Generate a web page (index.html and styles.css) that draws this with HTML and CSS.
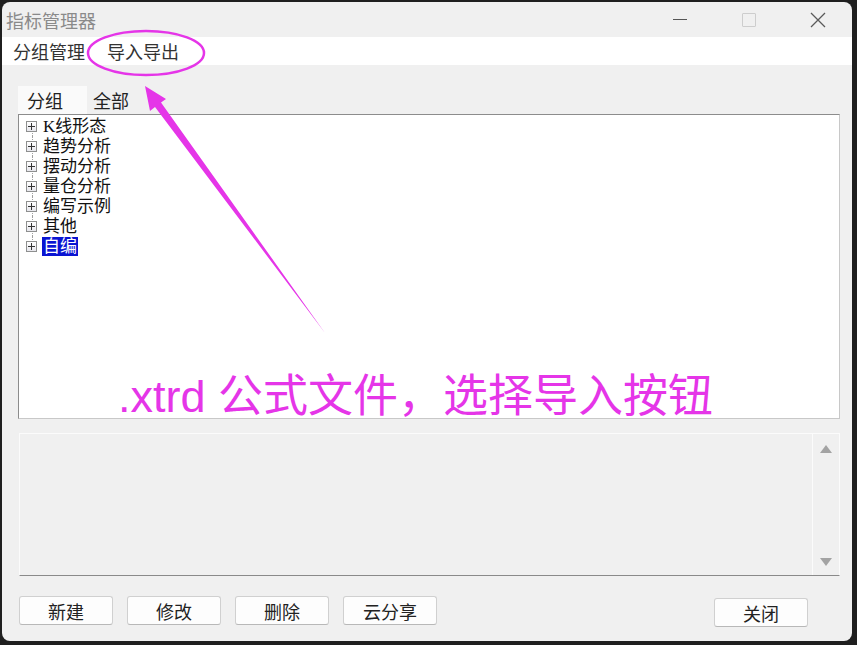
FILE: index.html
```html
<!DOCTYPE html>
<html>
<head>
<meta charset="utf-8">
<title>指标管理器</title>
<link rel="stylesheet" href="styles.css">
</head>
<body>
<div class="window">
  <div class="titlebar">
    <span class="title">指标管理器</span>
    <div class="controls">
      <span class="ctl"><span class="min"></span></span>
      <span class="ctl"><span class="max"></span></span>
      <span class="ctl">
        <svg width="16" height="16" viewBox="0 0 16 16"><path d="M1 1 L15 15 M15 1 L1 15" stroke="#5a5a5a" stroke-width="1.3" fill="none"/></svg>
      </span>
    </div>
  </div>

  <div class="menubar">
    <span class="menu-item">分组管理</span>
    <span class="menu-item">导入导出</span>
  </div>

  <div class="content">
    <div class="tabs">
      <span class="tab active">分组</span>
      <span class="tab">全部</span>
    </div>

    <div class="tree">
      <ul>
        <li><span class="expander"></span><span class="label">K线形态</span></li>
        <li><span class="expander"></span><span class="label">趋势分析</span></li>
        <li><span class="expander"></span><span class="label">摆动分析</span></li>
        <li><span class="expander"></span><span class="label">量仓分析</span></li>
        <li><span class="expander"></span><span class="label">编写示例</span></li>
        <li><span class="expander"></span><span class="label">其他</span></li>
        <li class="last"><span class="expander"></span><span class="label selected">自编</span></li>
      </ul>
    </div>

    <div class="desc">
      <div class="desc-text"></div>
      <div class="scrollbar">
        <span class="arrow up"></span>
        <span class="arrow down"></span>
      </div>
    </div>

    <div class="buttons">
      <div class="btn-group">
        <button class="btn" type="button">新建</button>
        <button class="btn" type="button">修改</button>
        <button class="btn" type="button">删除</button>
        <button class="btn" type="button">云分享</button>
      </div>
      <button class="btn close-btn" type="button">关闭</button>
    </div>
  </div>

  <!-- annotation drawn on top of the screenshot -->
  <svg class="markup" width="857" height="645" viewBox="0 0 857 645">
    <ellipse cx="146" cy="53" rx="58" ry="22" fill="none" stroke="#e535e8" stroke-width="2.5"/>
    <polygon points="145,86 166,99 161,102.5 325,333 155,107 150,111" fill="#e535e8"/>
  </svg>
  <div class="note">.xtrd 公式文件，选择导入按钮</div>
</div>
</body>
</html>
```

FILE: styles.css
```css
html, body {
  margin: 0;
  padding: 0;
}

body {
  background-color: #1f1f1f;
  width: 857px;
  height: 645px;
  overflow: hidden;
  font-family: "Noto Sans CJK SC", sans-serif;
}

.window {
  position: relative;
  margin: 2px 0 0 2px;
  width: 850px;
  height: 639px;
  background-color: #f0f0f0;
  border-radius: 8px;
  overflow: hidden;
}

/* title bar */
.titlebar {
  height: 35px;
  display: flex;
  align-items: center;
  justify-content: space-between;
}

.title {
  padding-left: 4px;
  font-size: 18px;
  color: #8a8a8a;
}

.controls {
  display: flex;
  height: 100%;
}

.ctl {
  width: 69px;
  display: flex;
  align-items: center;
  justify-content: center;
}

.min {
  width: 14px;
  border-top: 1px solid #555;
}

.max {
  width: 12px;
  height: 12px;
  border: 1px solid #cdcdcd;
  border-radius: 1px;
}

/* menu */
.menubar {
  height: 28px;
  background-color: #fff;
  display: flex;
  align-items: center;
  padding-left: 11px;
}

.menu-item {
  font-size: 18px;
  color: #333;
  margin-right: 22px;
}

.content {
  padding: 21px 12px 0 16px;
}

/* tabs */
.tabs {
  display: flex;
  height: 28px;
}

.tab {
  font-size: 18px;
  color: #222;
  line-height: 28px;
  padding: 0 6px;
  width: 41px;
}

.tab.active {
  width: 60px;
  padding: 0 0 0 9px;
  background-color: #fafafa;
}

/* tree */
.tree {
  height: 303px;
  background-color: #fff;
  border: 1px solid #8c8c8c;
  border-right-color: #c8c8c8;
  border-bottom-color: #c8c8c8;
}

.tree ul {
  list-style: none;
  margin: 0;
  padding: 1px 0 0 7px;
}

.tree li {
  position: relative;
  height: 20px;
  display: flex;
  align-items: center;
}

.tree li::before {
  content: "";
  position: absolute;
  left: 6px;
  top: 0;
  bottom: 0;
  border-left: 1px dotted #a0a0a0;
}

.tree li:first-child::before {
  top: 10px;
}

.tree li.last::before {
  bottom: 10px;
}

.expander {
  position: relative;
  z-index: 1;
  width: 11px;
  height: 11px;
  box-sizing: border-box;
  border: 1px solid #8e8f8f;
  background: linear-gradient(#ffffff, #e6e6ec);
  margin-right: 5px;
}

.expander::before {
  content: "";
  position: absolute;
  left: 1px;
  right: 1px;
  top: 4px;
  border-top: 1px solid #333;
}

.expander::after {
  content: "";
  position: absolute;
  top: 1px;
  bottom: 1px;
  left: 4px;
  border-left: 1px solid #333;
}

.label {
  font-family: "Liberation Serif", "Noto Sans CJK SC", serif;
  font-size: 17px;
  line-height: 19px;
  color: #111;
  padding: 0 1px;
}

.label.selected {
  background-color: #0a14d2;
  color: #fff;
}

/* description box */
.desc {
  margin-top: 14px;
  margin-left: 1px;
  height: 141px;
  display: flex;
  border: 1px solid #fbfbfb;
  border-bottom: 1px solid #8a8a8a;
}

.desc-text {
  flex: 1;
}

.scrollbar {
  width: 26px;
  border-left: 1px solid #fbfbfb;
  display: flex;
  flex-direction: column;
  justify-content: space-between;
  align-items: center;
  padding: 11px 0 9px;
}

.arrow {
  width: 0;
  height: 0;
  border-left: 6px solid transparent;
  border-right: 6px solid transparent;
}

.arrow.up {
  border-bottom: 8px solid #a3a3a3;
}

.arrow.down {
  border-top: 8px solid #a3a3a3;
}

/* buttons */
.buttons {
  margin-top: 20px;
  margin-left: 1px;
  display: flex;
  justify-content: space-between;
  padding-right: 32px;
}

.btn-group {
  display: flex;
  gap: 14px;
}

.btn {
  width: 94px;
  height: 29px;
  background-color: #fdfdfd;
  border: 1px solid #d0d0d0;
  border-bottom-color: #b8b8b8;
  border-radius: 3px;
  font-family: "Noto Sans CJK SC", sans-serif;
  font-size: 18px;
  color: #222;
  padding: 0;
}

.close-btn {
  margin-top: 2px;
}

/* annotations */
.markup {
  position: absolute;
  left: -2px;
  top: -2px;
  pointer-events: none;
}

.note {
  position: absolute;
  left: 116px;
  top: 369px;
  font-family: "Liberation Sans", "Noto Sans CJK SC", sans-serif;
  font-size: 45px;
  line-height: 52px;
  color: #e535e8;
  white-space: nowrap;
}
```
